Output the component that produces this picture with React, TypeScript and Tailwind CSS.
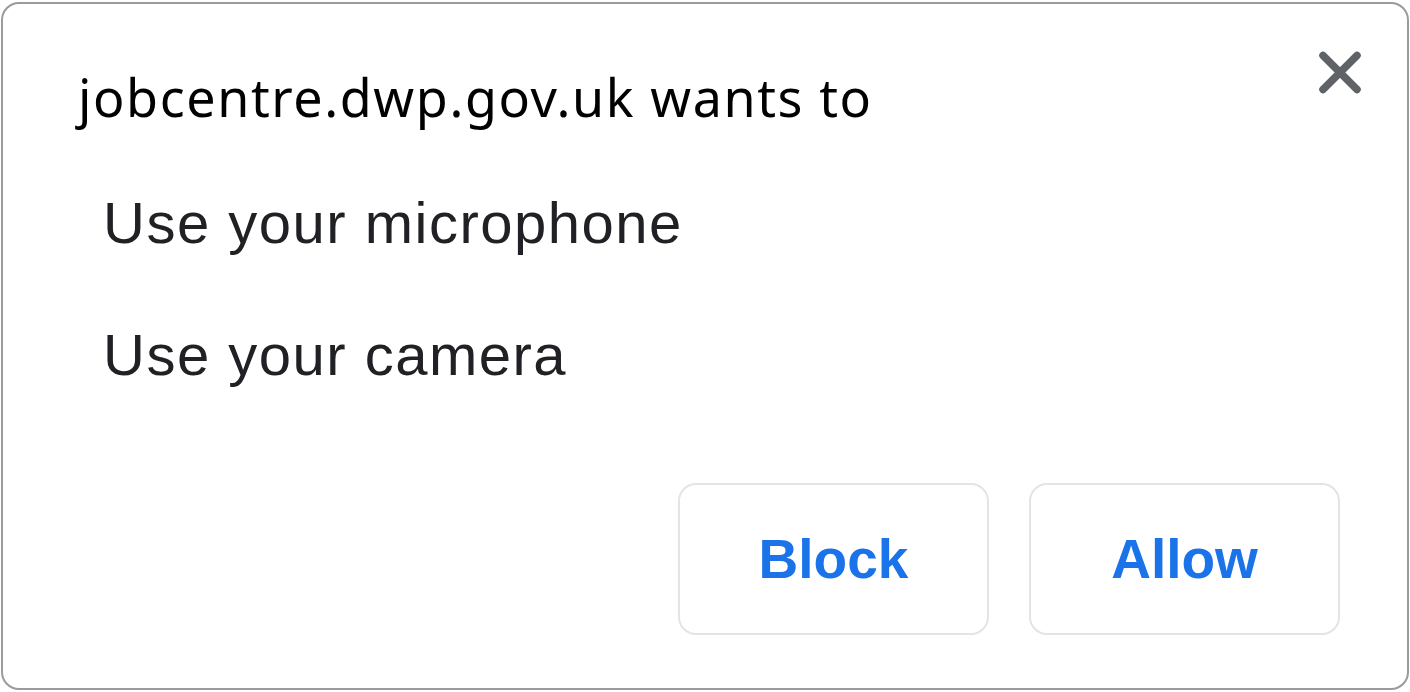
import React from "react";

export default function App() {
  return (
    <div className="w-[1410px] h-[692px] bg-white overflow-hidden">
      <div className="ml-[1px] mt-[2px] w-[1408px] h-[688px] border-2 border-[#9b9b9b] rounded-[18px] bg-white flex flex-col">
        <div className="flex items-start justify-between pt-[46px] pl-[75px] pr-[45px]">
          <h1
            className="mt-[21px] text-[52px] leading-none text-black tracking-[1.6px]"
            style={{ fontFamily: '"Noto Sans", sans-serif' }}
          >
            jobcentre.dwp.gov.uk wants to
          </h1>
          <button className="w-[44px] h-[45px] flex items-center justify-center" aria-label="Close">
            <svg width="44" height="45" viewBox="0 0 44 45">
              <path d="M5 5.5 L39 39.5 M39 5.5 L5 39.5" stroke="#5f6368" strokeWidth="7.5" strokeLinecap="round" fill="none" />
            </svg>
          </button>
        </div>
        <div
          className="flex flex-col gap-[74px] mt-[71px] pl-[100px] text-[58px] leading-none text-[#202124] tracking-[1.5px]"
          style={{ fontFamily: '"Liberation Sans", Arial, sans-serif' }}
        >
          <div>Use your microphone</div>
          <div>Use your camera</div>
        </div>
        <div
          className="flex justify-end gap-[40px] mt-[99px] pr-[67px]"
          style={{ fontFamily: '"Liberation Sans", Arial, sans-serif' }}
        >
          <button className="w-[311px] h-[152px] border-2 border-[#e3e4e7] rounded-[18px] bg-white text-[#1a73e8] text-[55px] font-bold flex items-center justify-center">
            Block
          </button>
          <button className="w-[311px] h-[152px] border-2 border-[#e3e4e7] rounded-[18px] bg-white text-[#1a73e8] text-[55px] font-bold flex items-center justify-center">
            Allow
          </button>
        </div>
      </div>
    </div>
  );
}
